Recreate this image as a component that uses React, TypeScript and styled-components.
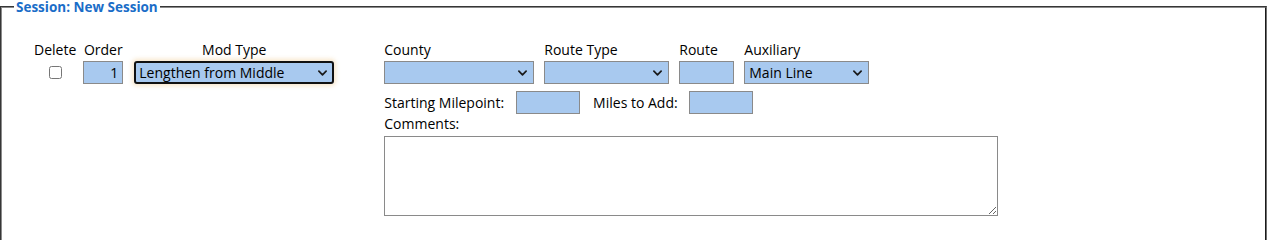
import styled, { createGlobalStyle } from 'styled-components';

const GlobalStyle = createGlobalStyle`
    body {
        margin: 0;
        background: #ffffff;
        font-family: 'Open Sans', 'Liberation Sans', sans-serif;
        font-size: 14px;
        color: #000000;
    }
`;

function Chevron() {
    return (
        <ChevronIcon viewBox="0 0 10 6" aria-hidden="true">
            <path d="M1 1 L5 5 L9 1" fill="none" stroke="#1a1a1a" strokeWidth="1.9" strokeLinecap="round" strokeLinejoin="round" />
        </ChevronIcon>
    );
}

function SelectBox({ width, value, focused }: { width: number; value?: string; focused?: boolean }) {
    return (
        <SelectWrap $width={width} $focused={focused}>
            <SelectControl $focused={focused} defaultValue={value ?? ''}>
                <option value={value ?? ''}>{value ?? ''}</option>
            </SelectControl>
            <Chevron />
        </SelectWrap>
    );
}

export default function App(): JSX.Element {
    return (
        <>
            <GlobalStyle />
            <SessionSet>
                <Legend>Session: New Session</Legend>
                <FormRow>
                    <LeftGroup>
                        <Field $center $mr={7}>
                            <Label>Delete</Label>
                            <CheckCell>
                                <CheckBox type="checkbox" />
                            </CheckCell>
                        </Field>
                        <Field $center $mr={11}>
                            <Label>Order</Label>
                            <TextBox $width={40} $right defaultValue="1" />
                        </Field>
                        <Field $center>
                            <Label>Mod Type</Label>
                            <SelectBox width={200} value="Lengthen from Middle" focused />
                        </Field>
                    </LeftGroup>
                    <RightGroup>
                        <TopRow>
                            <Field>
                                <Label>County</Label>
                                <SelectBox width={150} />
                            </Field>
                            <Field>
                                <Label>Route Type</Label>
                                <SelectBox width={125} />
                            </Field>
                            <Field>
                                <Label>Route</Label>
                                <TextBox $width={55} />
                            </Field>
                            <Field>
                                <Label>Auxiliary</Label>
                                <SelectBox width={125} value="Main Line" />
                            </Field>
                        </TopRow>
                        <InlineRow>
                            <InlineLabel $mr={12}>Starting Milepoint:</InlineLabel>
                            <TextBox $width={64} />
                            <InlineLabel $ml={13} $mr={11}>Miles to Add:</InlineLabel>
                            <TextBox $width={64} />
                        </InlineRow>
                        <Label>Comments:</Label>
                        <Comments />
                    </RightGroup>
                </FormRow>
            </SessionSet>
        </>
    );
}

const SessionSet = styled.fieldset`
    margin: 0;
    min-height: 230px;
    padding: 26px 12px 0 32px;
    border: 2px groove #d4d4d4;
    border-right-color: #6f6f6f;
    border-top-color: #8a8a8a;
    border-left-color: #8a8a8a;
`;

const Legend = styled.legend`
    margin-left: -20px;
    padding: 0 2px;
    color: #1a6dc8;
    font-weight: bold;
    font-size: 13.5px;
    line-height: 14px;
`;

const FormRow = styled.div`
    display: flex;
    align-items: flex-start;
`;

const LeftGroup = styled.div`
    display: flex;
    align-items: flex-start;
    margin-right: 50px;
`;

const RightGroup = styled.div`
    display: flex;
    flex-direction: column;
    align-items: flex-start;
`;

const TopRow = styled.div`
    display: flex;
    gap: 10px;
`;

const Field = styled.div<{ $center?: boolean; $mr?: number }>`
    display: flex;
    flex-direction: column;
    align-items: ${(p) => (p.$center ? 'center' : 'flex-start')};
    margin-right: ${(p) => p.$mr ?? 0}px;
`;

const Label = styled.span`
    display: block;
    height: 21px;
    line-height: 20px;
    white-space: nowrap;
`;

const CheckCell = styled.div`
    height: 23px;
    display: flex;
    align-items: center;
`;

const CheckBox = styled.input`
    width: 13px;
    height: 13px;
    margin: 0;
    accent-color: #1a6dc8;
`;

const TextBox = styled.input<{ $width: number; $right?: boolean }>`
    box-sizing: border-box;
    width: ${(p) => p.$width}px;
    height: 23px;
    margin: 0;
    padding: 0 4px;
    border: 1px solid #8a8a8a;
    background: #a8c9ef;
    font-family: inherit;
    font-size: 14px;
    text-align: ${(p) => (p.$right ? 'right' : 'left')};
    outline: none;
`;

const SelectWrap = styled.div<{ $width: number; $focused?: boolean }>`
    position: relative;
    width: ${(p) => p.$width}px;
    height: 23px;
    border-radius: 3px;
    box-shadow: ${(p) => (p.$focused ? '0 0 4px 2px rgba(240, 200, 140, 0.45)' : 'none')};
`;

const SelectControl = styled.select<{ $focused?: boolean }>`
    appearance: none;
    box-sizing: border-box;
    width: 100%;
    height: 100%;
    margin: 0;
    padding: 0 0 0 ${(p) => (p.$focused ? 3 : 4)}px;
    border: ${(p) => (p.$focused ? '2px solid #111111' : '1px solid #8a8a8a')};
    border-radius: ${(p) => (p.$focused ? 3 : 0)}px;
    background: #a8c9ef;
    color: #000000;
    font-family: inherit;
    font-size: 14px;
    outline: none;
`;

const ChevronIcon = styled.svg`
    position: absolute;
    right: 7px;
    top: 9px;
    width: 9px;
    height: 6px;
    pointer-events: none;
`;

const InlineRow = styled.div`
    display: flex;
    align-items: center;
    margin-top: 7px;
`;

const InlineLabel = styled.span<{ $ml?: number; $mr?: number }>`
    margin-left: ${(p) => p.$ml ?? 0}px;
    margin-right: ${(p) => p.$mr ?? 0}px;
    white-space: nowrap;
`;

const Comments = styled.textarea`
    box-sizing: border-box;
    width: 614px;
    height: 80px;
    margin: 1px 0 0;
    border: 1px solid #8a8a8a;
    background: #ffffff;
    font-family: inherit;
    font-size: 14px;
    outline: none;
`;
